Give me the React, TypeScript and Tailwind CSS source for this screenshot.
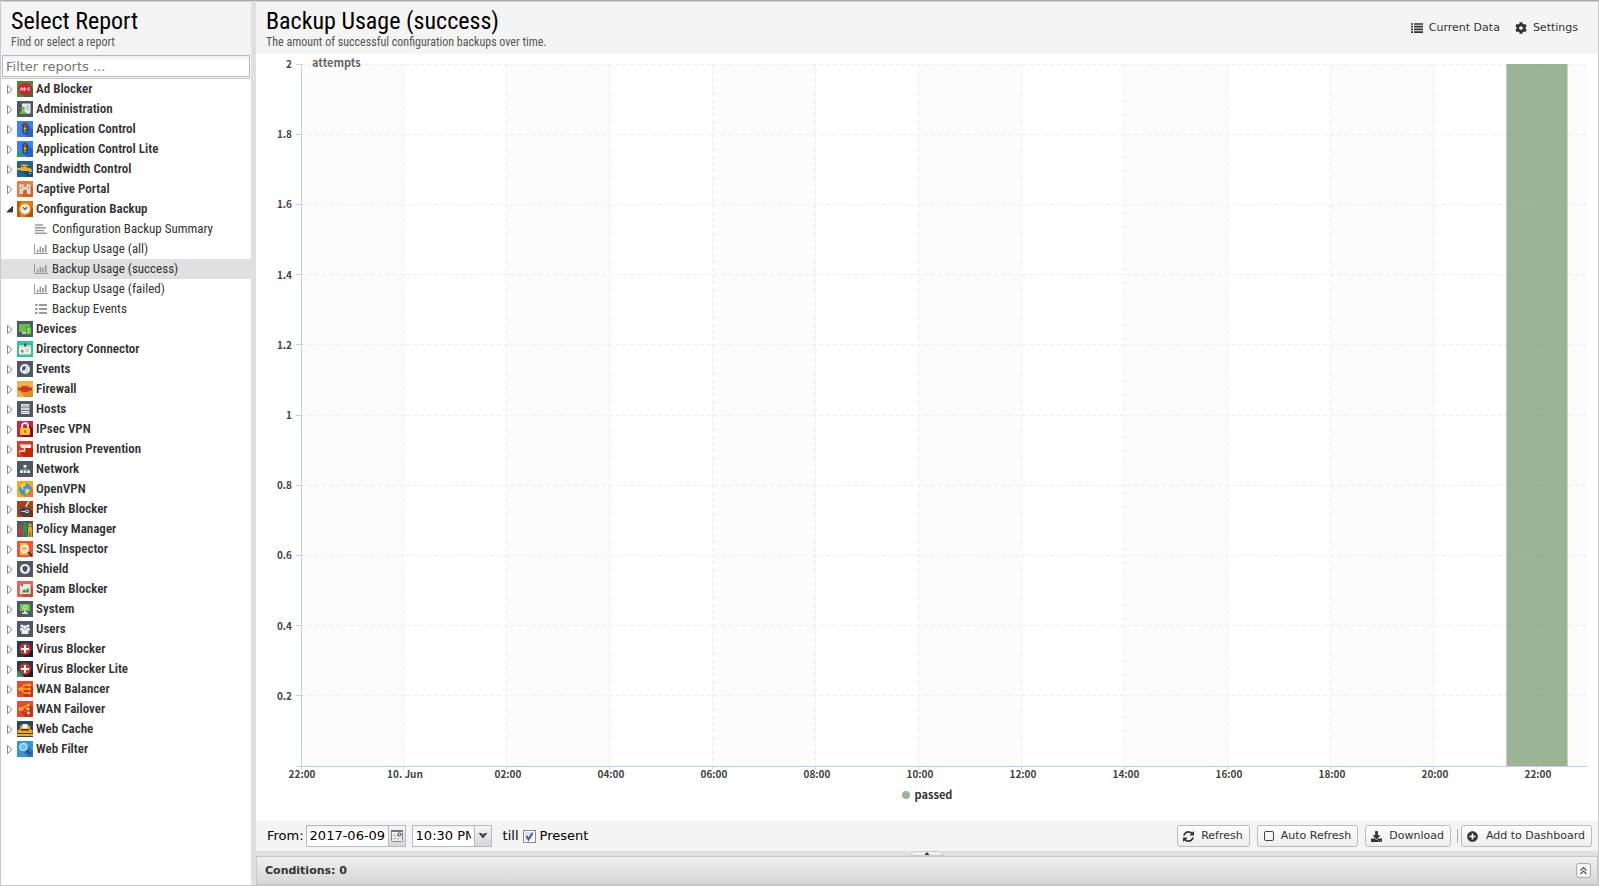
import React from 'react';
import { FaCog, FaDownload, FaPlusCircle } from 'react-icons/fa';

const condensed = "font-['Roboto_Condensed','Liberation_Sans_Narrow',Roboto,sans-serif]";

type Child = { title: string; icon: 'text' | 'chart' | 'list'; selected?: boolean };
type Category = { title: string; bg: string; art: React.ReactNode; children?: Child[] };

const cross = (
  <>
    <path d="M8 3 16 10v6H7z" fill="#141f30" />
    <circle cx="8" cy="8" r="6" fill="#c9312b" />
    <path d="M7 4h2v3h3v2H9v3H7V9H4V7h3z" fill="#fff" />
  </>
);

const trafficLight = (
  <>
    <path d="M10 3 16 9v7H10L6 12z" fill="#2861cf" />
    <rect x="5.500" y="2" width="5" height="11" rx="1.500" fill="#37474f" />
    <path d="M4.500 4h7l-1 2h-5zm0 3.500h7l-1 2h-5z" fill="#37474f" />
    <circle cx="8" cy="4.500" r="1.300" fill="#e5392e" />
    <circle cx="8" cy="7.500" r="1.300" fill="#fbc02d" />
    <circle cx="8" cy="10.500" r="1.300" fill="#3dbb4d" />
  </>
);

const liteRibbon = <path d="M0 9v7h7z" fill="#2f9e5b" />;

const categories: Category[] = [
  {
    title: 'Ad Blocker',
    bg: '#4c8a35',
    art: (
      <>
        <path d="M12 4 16 8v8H8l-3-3z" fill="#3b6e29" />
        <path d="M5 2h6l3.500 3.500v5L11 14H5l-3.500-3.500v-5z" fill="#cf2233" />
        <path d="M3.500 9.500 4.500 6.500 5.700 9.500M7 6.700v2.600c2 0 2-2.600 0-2.600M12.300 6.700c-2-.3-2 1.300-.7 1.300s1.200 1.500-.9 1.300" fill="none" stroke="#fff" strokeWidth="1" />
      </>
    ),
  },
  {
    title: 'Administration',
    bg: '#515767',
    art: (
      <>
        <rect x="5" y="2.500" width="8.500" height="10" fill="#e9edf2" />
        <path d="M9 5h3M9 7h3M10 9h2" stroke="#a3a9b3" />
        <circle cx="6" cy="7.500" r="2" fill="#63bd45" />
        <path d="M2.500 13c0-4.500 7-4.500 7 0z" fill="#63bd45" />
      </>
    ),
  },
  { title: 'Application Control', bg: '#3f82ee', art: trafficLight },
  {
    title: 'Application Control Lite',
    bg: '#3f82ee',
    art: (
      <>
        {trafficLight}
        {liteRibbon}
      </>
    ),
  },
  {
    title: 'Bandwidth Control',
    bg: '#1c6791',
    art: (
      <>
        <path d="M4 9 11 16h5v-4l-5-4z" fill="#155071" />
        <path d="M0 7h3l1.500-1h5L11 7c3 0 4 1 4 4h-3c0-1-1-1-2-1H4.500L3 9H0z" fill="#f9a61a" />
        <path d="M4 3.500h7V5H8.500v2h-2V5H4z" fill="#f9a61a" />
        <path d="M12 12.500h2" stroke="#6fd0f5" />
      </>
    ),
  },
  {
    title: 'Captive Portal',
    bg: '#f4783b',
    art: (
      <>
        <path d="M13 4 16 7v9H6l-3-3z" fill="#d95f24" />
        <path d="M2.500 3H4v1h1V3h1.500v3h3V3H11v1h1V3h1.500v10H10v-2.500a2 2 0 0 0-4 0V13H2.500z" fill="#d8dadd" />
        <path d="M4.500 6v1.500M11.500 6v1.500" stroke="#777b82" />
      </>
    ),
  },
  {
    title: 'Configuration Backup',
    bg: '#e67612',
    art: (
      <>
        <path d="M0 0h3v16H0z" fill="#c85703" />
        <path d="M12 4 16 8v8H8z" fill="#b95104" />
        <circle cx="8" cy="8" r="6" fill="#fba93c" />
        <circle cx="8" cy="8" r="4.500" fill="#f5f5f5" />
        <path d="M5.800 6.200 8 8.300 10.200 6.200" fill="none" stroke="#59616b" strokeWidth="1.400" />
      </>
    ),
    children: [
      { title: 'Configuration Backup Summary', icon: 'text' },
      { title: 'Backup Usage (all)', icon: 'chart' },
      { title: 'Backup Usage (success)', icon: 'chart', selected: true },
      { title: 'Backup Usage (failed)', icon: 'chart' },
      { title: 'Backup Events', icon: 'list' },
    ],
  },
  {
    title: 'Devices',
    bg: '#515767',
    art: (
      <>
        <rect x="2" y="3" width="11" height="8" fill="#64c344" />
        <path d="M5 11h4v2H5z" fill="#c9cdd3" />
        <rect x="9.500" y="6" width="4.500" height="7.500" fill="#7ed25f" stroke="#3d8a26" strokeWidth=".8" />
      </>
    ),
  },
  {
    title: 'Directory Connector',
    bg: '#2cc5a0',
    art: (
      <>
        <rect x="2" y="4.500" width="12" height="9" rx="1" fill="#f6f3ee" />
        <path d="M2 4.500h12v2H2z" fill="#ddd6cc" />
        <path d="M7 2.500h2.500v3H7z" fill="#4b5868" />
        <path d="M4 11.500V9h2.500v2.500z" fill="#e05848" />
        <path d="M8.500 8.500h4M8.500 10.500h3" stroke="#b8b8b8" />
      </>
    ),
  },
  {
    title: 'Events',
    bg: '#515767',
    art: (
      <>
        <circle cx="8" cy="8" r="4" fill="none" stroke="#eef0f4" strokeWidth="2" />
        <path d="M8 4.500V8l-2.500 2C6.500 12 11 11.500 11 8s-3-3.500-3-3.500z" fill="#dfe3ea" />
        <path d="M8 5v3.500H6" fill="none" stroke="#515767" />
      </>
    ),
  },
  {
    title: 'Firewall',
    bg: '#f3b046',
    art: (
      <>
        <path d="M2 10 8 16h8V9l-3-2z" fill="#e58b24" />
        <path d="M4.500 5h7v1.500H15v3h-3.500V11h-7V9.500H1v-3h3.500z" fill="#d1392a" />
        <path d="M4.500 8h7" stroke="#b92b20" strokeWidth=".6" />
      </>
    ),
  },
  {
    title: 'Hosts',
    bg: '#515767',
    art: (
      <>
        <path d="M4 3h8.500v2.700H4zM4 6.500h8.500v2.700H4zM4 10h8.500v3H4z" fill="#dfe3ea" />
        <path d="M5 4.500h6.500M5 8h6.500M5 11.500h6.500" stroke="#a2a8b5" strokeWidth=".7" />
      </>
    ),
  },
  {
    title: 'IPsec VPN',
    bg: '#cf2344',
    art: (
      <>
        <path d="M12 4 16 8v8H6l-3-3z" fill="#96031e" />
        <path d="M5 8V5a3 3 0 0 1 6 0v3" fill="none" stroke="#eceff1" strokeWidth="1.800" />
        <rect x="3" y="7" width="10" height="7" rx="1" fill="#fbc52d" />
        <path d="M8 9v3" stroke="#a86a08" strokeWidth="1.500" />
      </>
    ),
  },
  {
    title: 'Intrusion Prevention',
    bg: '#de3d1b',
    art: (
      <>
        <path d="M12 5 16 8v8H6l-3-5z" fill="#c82406" />
        <path d="M2.500 3.500h11.500V7H4.500z" fill="#f5f5f5" />
        <path d="M7.500 7v3H3.500" fill="none" stroke="#e3e6ea" strokeWidth="1.500" />
        <path d="M3 9v3" stroke="#e3e6ea" />
      </>
    ),
  },
  {
    title: 'Network',
    bg: '#515767',
    art: (
      <>
        <path d="M8 5.500v4M4.500 10V8.500h7V10" fill="none" stroke="#68b94c" />
        <path d="M6.500 4h3v2.500h-3zM3 9.500h3V12H3zM6.700 9.500h2.600V12H6.700zM10 9.500h3V12h-3z" fill="#eef0f4" />
      </>
    ),
  },
  {
    title: 'OpenVPN',
    bg: '#fba81f',
    art: (
      <>
        <path d="M13 4 16 8v8H7l-3-3z" fill="#f5762a" />
        <circle cx="8" cy="8" r="6" fill="#2a9fd8" />
        <path d="M3 5c2-3 4-3.500 6-2.500L8 5 5.500 6.500 7 8 5.500 9zM8.500 7.500 12 8l1 1.500-3 4-1.500-.5-.5-3z" fill="#fbd23c" />
      </>
    ),
  },
  {
    title: 'Phish Blocker',
    bg: '#a54410',
    art: (
      <>
        <path d="M12 7 16 11v5H6l-3-4z" fill="#7c2f08" />
        <path d="M12 0 8.500 6" stroke="#d8dadd" strokeWidth="1.500" />
        <path d="M3 8.500 8.500 5v3h4.500v5H5c-1.500 0-2.500-2-2-4.500z" fill="#2d4868" />
        <path d="M4 10.500h4M8.500 9.500h3v2h-3z" stroke="#d5dde6" strokeWidth=".9" fill="none" />
      </>
    ),
  },
  {
    title: 'Policy Manager',
    bg: '#515767',
    art: (
      <>
        <path d="M2 7.500h3.500V16H2z" fill="#d93831" />
        <circle cx="3.800" cy="5.500" r="1.500" fill="#d93831" />
        <path d="M6 5h4v11H6z" fill="#259a50" />
        <circle cx="8" cy="3.200" r="1.700" fill="#259a50" />
        <path d="M11 6h4v10h-4z" fill="#dba91d" />
        <circle cx="13" cy="4" r="1.700" fill="#dba91d" />
        <path d="M3.800 12v4M8 11v5M13 11v5" stroke="#444b5b" strokeWidth=".9" />
      </>
    ),
  },
  {
    title: 'SSL Inspector',
    bg: '#f5523c',
    art: (
      <>
        <path d="M3 2h6.500L12 4.500V14H3z" fill="#fbb62f" />
        <circle cx="7.500" cy="8" r="3.800" fill="#fbe0bd" stroke="#fff" />
        <path d="M5.500 8.500V8a1 1 0 0 1 2 0v.5M7.500 8a1 1 0 0 1 2 0v.5" fill="none" stroke="#f08a24" strokeWidth="1" />
        <path d="m11 11 4 4" stroke="#4b2b20" strokeWidth="1.800" />
      </>
    ),
  },
  {
    title: 'Shield',
    bg: '#515767',
    art: (
      <>
        <circle cx="8" cy="8" r="5" fill="#f1f3f6" />
        <path d="M8 4.800 10.700 6c0 3-1 4.400-2.700 5.200C6.300 10.400 5.300 9 5.300 6z" fill="#515767" />
      </>
    ),
  },
  {
    title: 'Spam Blocker',
    bg: '#e5645b',
    art: (
      <>
        <path d="M13 4 16 7v9H7l-3-3z" fill="#cb473f" />
        <path d="M3 3h10.500v10H3z" fill="#ecebe4" />
        <path d="M4.500 11.500 7 8l2 1.500L11 6.500l1 2.500v2.500z" fill="#3d9a4f" />
        <path d="M3 3h3v3z" fill="#7d5b4f" />
      </>
    ),
  },
  {
    title: 'System',
    bg: '#515767',
    art: (
      <>
        <rect x="3" y="3" width="10" height="7" fill="#6cc54d" />
        <circle cx="8" cy="6.500" r="1.800" fill="none" stroke="#dff3d7" />
        <path d="M7 10h2v1.500h2V13H5v-1.500h2z" fill="#dfe3ea" />
      </>
    ),
  },
  {
    title: 'Users',
    bg: '#515767',
    art: (
      <g fill="#eef0f4">
        <circle cx="5" cy="5" r="1.600" />
        <circle cx="11" cy="5" r="1.600" />
        <circle cx="8" cy="6.300" r="2" />
        <path d="M3 9.500V8c0-1 1-1.300 2.500-1L7 8.500h2L10.500 7c1.500-.3 2.500 0 2.500 1v1.500h-1.500V12c0 .6-.4 1-1 1h-5c-.6 0-1-.4-1-1V9.500z" />
      </g>
    ),
  },
  { title: 'Virus Blocker', bg: '#24395a', art: cross },
  {
    title: 'Virus Blocker Lite',
    bg: '#24395a',
    art: (
      <>
        {cross}
        {liteRibbon}
      </>
    ),
  },
  {
    title: 'WAN Balancer',
    bg: '#e8492f',
    art: (
      <>
        <path d="M13 4 16 7v9H8l-4-6z" fill="#cf2e1a" />
        <path d="M3 8h9M4 8l3-4h5M4 8l3 4h5" fill="none" stroke="#fbae1f" strokeWidth="1.300" />
        <g fill="#fbae1f">
          <circle cx="3" cy="8" r="1.700" />
          <circle cx="12.500" cy="4" r="1.500" />
          <circle cx="12.500" cy="8" r="1.500" />
          <circle cx="12.500" cy="12" r="1.500" />
        </g>
      </>
    ),
  },
  {
    title: 'WAN Failover',
    bg: '#e8492f',
    art: (
      <>
        <path d="M13 4 16 7v9H8l-4-6z" fill="#cf2e1a" />
        <path d="M3 8 11.500 4" stroke="#fbae1f" strokeWidth="1.500" />
        <path d="M3 8h8M3 8l8 4" stroke="#fbae1f" strokeDasharray="1.500 1" />
        <circle cx="3.500" cy="8" r="2" fill="#fbae1f" />
        <circle cx="11.500" cy="4" r="1.500" fill="#fbae1f" />
        <circle cx="11" cy="8" r="1.400" fill="#f6d9d4" />
        <circle cx="11.500" cy="12" r="1.400" fill="#f6d9d4" />
      </>
    ),
  },
  {
    title: 'Web Cache',
    bg: '#2b4860',
    art: (
      <>
        <path d="M3 4.500h10V8l2.500 1.500V12H.5V9.500L3 8z" fill="#f9a51a" />
        <path d="M5.500 3h5v4.500h-5z" fill="#f5f5f5" />
        <path d="M4 8h8v1.500H4z" fill="#24303c" />
        <path d="M0 13h16v2H0z" fill="#f9a51a" />
      </>
    ),
  },
  {
    title: 'Web Filter',
    bg: '#3596de',
    art: (
      <>
        <path d="M10 4 16 10v6H12L4 9z" fill="#2277bb" />
        <path d="m9 9 4.500 4" stroke="#3d4855" strokeWidth="2" />
        <circle cx="6.500" cy="6" r="3.700" fill="#6fc0f5" stroke="#d9e2ea" strokeWidth="1.200" />
      </>
    ),
  },
];

const xLabels = ['22:00', '10. Jun', '02:00', '04:00', '06:00', '08:00', '10:00', '12:00', '14:00', '16:00', '18:00', '20:00', '22:00'];
const yLabels = ['2', '1.8', '1.6', '1.4', '1.2', '1', '0.8', '0.6', '0.4', '0.2'];

// share of the plot width taken by a two hour interval
const step = 8.003;

export default function App() {
  return (
    <div className="flex h-screen border border-[#c9c9c9] border-t-[#a8a8a8] bg-[#e0e0e0] font-['DejaVu_Sans',sans-serif] text-black">
      <Sidebar />
      <main className="ml-[5px] flex min-w-0 flex-1 flex-col">
        <Header />
        <Chart />
        <Toolbar />
        <Conditions />
      </main>
    </div>
  );
}

const Heading = ({ title, text }: { title: string; text: string }) => {
  return (
    <div className={condensed}>
      <h1 className="text-2xl leading-[30px]">{title}</h1>
      <p className="text-xs leading-3 text-[#555]">{text}</p>
    </div>
  );
};

const Sidebar = () => {
  return (
    <aside className="flex w-[250px] shrink-0 flex-col bg-white">
      <div className="h-[53px] bg-[#f4f4f4] px-2.5 pt-[5px] shadow-[inset_0_1px_0_#d5d5d5]">
        <Heading title="Select Report" text="Find or select a report" />
      </div>
      <div className="border-b border-[#c4c4c4] bg-[#f4f4f4] p-px">
        <input
          type="text"
          aria-label="Filter reports"
          placeholder="Filter reports ..."
          className="block h-[22px] w-full border border-[#b5b8c8] bg-linear-to-b from-[#eef0f0] to-white to-25% px-[3px] text-[13px] placeholder:text-[#757575]"
        />
      </div>
      <ul className="min-h-0 flex-1 overflow-hidden">
        {categories.map((category) => (
          <li key={category.title}>
            <button
              type="button"
              aria-expanded={!!category.children}
              className={`flex h-5 w-full items-center text-left text-[13px] font-semibold text-[#333] ${condensed}`}
            >
              <Expander open={!!category.children} />
              <svg viewBox="0 0 16 16" className="mr-[3px] size-4 shrink-0">
                <rect width="16" height="16" fill={category.bg} />
                {category.art}
              </svg>
              {category.title}
            </button>
            {category.children && (
              <ul>
                {category.children.map((child) => (
                  <li key={child.title}>
                    <a
                      href="#"
                      className={`flex h-5 items-center gap-1 pl-[33px] text-[13px] text-[#333] ${condensed} ${child.selected ? 'bg-[#e0e0e0]' : ''}`}
                    >
                      <ReportIcon icon={child.icon} />
                      {child.title}
                    </a>
                  </li>
                ))}
              </ul>
            )}
          </li>
        ))}
      </ul>
    </aside>
  );
};

const Expander = ({ open }: { open: boolean }) => {
  return (
    <svg viewBox="0 0 16 16" className="size-4 shrink-0">
      {open ? (
        <path d="M11.500 5.500v5.500H6z" fill="#444" stroke="#111" strokeWidth=".8" />
      ) : (
        <path d="M6.500 4.500v8l4.500-4z" fill="#fff" stroke="#888" />
      )}
    </svg>
  );
};

const ReportIcon = ({ icon }: { icon: Child['icon'] }) => {
  return (
    <svg viewBox="0 0 14 12" className="h-3 w-3.5 shrink-0" stroke="#999" strokeWidth="1.500" fill="none">
      {icon === 'text' && <path d="M1 2h8M1 4.700h11M1 7.400h9M1 10.200h12" />}
      {icon === 'chart' && (
        <>
          <path d="M.5 1v9.500H14" strokeWidth="1" />
          <path d="M3.700 6.500v3M6.400 3.500v6M9 5v4.500M11.700 2v7.500" strokeWidth="1.700" />
        </>
      )}
      {icon === 'list' && <path d="M1 2h2.500M5 2h8M1 6h2.500M5 6h8M1 10h2.500M5 10h8" strokeWidth="1.800" />}
    </svg>
  );
};

const Header = () => {
  return (
    <header className="flex h-[53px] shrink-0 items-start justify-between bg-[#f4f4f4] pl-2.5 pr-5 pt-[5px] shadow-[inset_0_1px_0_#d5d5d5]">
      <Heading title="Backup Usage (success)" text="The amount of successful configuration backups over time." />
      <div className="flex gap-[15px] pt-3.5 text-[11px] leading-4 text-[#333]">
        <button type="button" className="flex items-center gap-1.5">
          <svg viewBox="0 0 12 10" className="h-2.5 w-3" stroke="#333" strokeWidth="1.700">
            <path d="M0 1h2M3 1h9M0 3.700h2M3 3.700h9M0 6.400h2M3 6.400h9M0 9.100h2M3 9.100h9" />
          </svg>
          Current Data
        </button>
        <button type="button" className="flex items-center gap-1.5">
          <FaCog size={12} />
          Settings
        </button>
      </div>
    </header>
  );
};

const Chart = () => {
  return (
    <section className="flex min-h-0 flex-1 flex-col bg-white font-['Noto_Sans_CJK_SC',sans-serif] text-[10px] font-bold">
      <div className="min-h-0 flex-1 pl-[45px] pr-2.5 pt-2.5">
        <svg className="block h-full w-full overflow-visible" role="img" aria-label="Backup Usage (success)">
          {xLabels.map((_, i) =>
            i % 2 === 0 ? (
              <rect key={i} x={`${i * step}%`} y="0" width={`${i === 12 ? 100 - 12 * step : step}%`} height="100%" fill="#fcfcfc" />
            ) : null,
          )}
          <g stroke="#ececec" strokeDasharray="4 3" shapeRendering="crispEdges">
            {yLabels.map((label, i) => (
              <line key={label} x1="0" x2="100%" y1={`${i * 10}%`} y2={`${i * 10}%`} />
            ))}
            {xLabels.map((_, i) => (
              <line key={i} x1={`${i * step}%`} x2={`${i * step}%`} y1="0" y2="100%" />
            ))}
          </g>
          <rect x="93.66%" y="0" width="4.75%" height="100%" fill="#7a9b71" fillOpacity=".75" />
          <g stroke="#c0d0e0" shapeRendering="crispEdges">
            <line x1="0" x2="0" y1="0" y2="100%" />
            <line x1="-5" x2="100%" y1="100%" y2="100%" />
            {yLabels.map((label, i) => (
              <line key={label} x1="-5" x2="0" y1={`${i * 10}%`} y2={`${i * 10}%`} />
            ))}
            {xLabels.map((_, i) => (
              <svg key={i} x={`${i * step}%`} y="100%" overflow="visible">
                <line x1="0" x2="0" y1="0" y2="3" />
              </svg>
            ))}
          </g>
          <g fill="#444" textAnchor="end">
            {yLabels.map((label, i) => (
              <text key={label} x="-9" y={`${i * 10}%`} dy="4">
                {label}
              </text>
            ))}
          </g>
          <g fill="#444" textAnchor="middle">
            {xLabels.map((label, i) => (
              <text key={i} x={`${i * step}%`} y="100%" dx="1" dy="12">
                {label}
              </text>
            ))}
          </g>
          <text x="11" y="3" fill="#666" fontSize="11" stroke="#fff" strokeWidth="3" paintOrder="stroke">
            attempts
          </text>
        </svg>
      </div>
      <div className="flex h-[55px] items-center justify-center gap-[5px] pt-0.5 text-[11px] text-[#333]">
        <span className="size-2 rounded-full bg-[#9bb494]" />
        passed
      </div>
    </section>
  );
};

const toolButton =
  'flex h-[22px] items-center gap-[7px] rounded-[3px] border border-[#bbb] bg-linear-to-b from-white to-[#ededed] text-[11px] text-[#333]';

const RefreshIcon = () => {
  return (
    <svg viewBox="0 128 1536 1536" className="size-[11px]" fill="currentColor">
      <path d="M1511 1056q0 5-1 7-64 268-268 434.500t-478 166.500q-146 0-282.500-55t-243.500-157l-129 129q-19 19-45 19t-45-19-19-45v-448q0-26 19-45t45-19h448q26 0 45 19t19 45-19 45l-137 137q71 66 161 102t187 36q134 0 250-65t186-179q11-17 53-117 8-23 30-23h192q13 0 22.500 9.500t9.500 22.500zm25-800v448q0 26-19 45t-45 19h-448q-26 0-45-19t-19-45 19-45l138-138q-148-137-349-137-134 0-250 65t-186 179q-11 17-53 117-8 23-30 23h-199q-13 0-22.500-9.500t-9.500-22.500v-7q65-268 270-434.500t480-166.500q146 0 284 55.500t245 156.500l130-129q19-19 45-19t45 19 19 45z" />
    </svg>
  );
};

const Toolbar = () => {
  return (
    <div className="flex h-[30px] shrink-0 items-center justify-between bg-[#f4f4f4] pl-[11px] pr-1.5 text-[13px]">
      <div className="flex items-center">
        <label htmlFor="from-date">From:</label>
        <div className="ml-0.5 flex h-[22px] w-[100px] border border-[#b5b8c8]">
          <input
            id="from-date"
            type="text"
            defaultValue="2017-06-09"
            className="w-0 flex-1 bg-linear-to-b from-[#eef0f0] to-white to-25% pl-[3px]"
          />
          <button type="button" aria-label="Pick date" className="border-l border-[#b5b8c8] bg-linear-to-b from-[#f6f6f6] to-[#d6d6d6] px-px">
            <svg viewBox="0 0 14 16" className="h-4 w-3.5">
              <rect x="1.500" y="2.500" width="11" height="11" rx="1" fill="#f4f4f4" stroke="#888" />
              <path d="M1 3h12" stroke="#777" strokeWidth="2" />
              <path d="M2 7.500h7M2 10.500h10M4.500 5v8M7.500 5v8" stroke="#ccc" />
              <circle cx="9.500" cy="6.500" r="1.500" fill="#fff" stroke="#222" />
            </svg>
          </button>
        </div>
        <div className="ml-1.5 flex h-[22px] w-20 border border-[#b5b8c8]">
          <input
            type="text"
            aria-label="From time"
            defaultValue="10:30 PM"
            className="w-0 flex-1 bg-linear-to-b from-[#eef0f0] to-white to-25% px-[3px]"
          />
          <button type="button" aria-label="Pick time" className="border-l border-[#b5b8c8] bg-linear-to-b from-[#f6f6f6] to-[#d6d6d6] px-px">
            <svg viewBox="0 0 14 16" className="h-4 w-3.5">
              <path d="M2.500 5h3L7 6.700 8.500 5h3L7 10.500z" fill="#444" />
            </svg>
          </button>
        </div>
        <span className="ml-[11px]">till</span>
        <label className="ml-1 flex items-center gap-1">
          <span className="grid">
            <input
              type="checkbox"
              defaultChecked
              className="col-start-1 row-start-1 size-[13px] appearance-none border border-[#888] bg-linear-to-br from-[#cfd4da] to-white shadow-[inset_0_0_0_1px_#fff]"
            />
            <svg viewBox="0 0 13 13" className="pointer-events-none col-start-1 row-start-1 size-[13px]">
              <path d="M3.500 6 5.500 9.500 9.500 3" fill="none" stroke="#3f5ca8" strokeWidth="2" />
            </svg>
          </span>
          Present
        </label>
      </div>
      <div className="flex items-center">
        <button type="button" className={`${toolButton} pl-[5px] pr-1.5`}>
          <RefreshIcon />
          Refresh
        </button>
        <button type="button" className={`${toolButton} ml-[7px] px-1.5`}>
          <svg viewBox="0 0 10 10" className="size-2.5">
            <rect x=".5" y=".5" width="9" height="9" rx="1.500" fill="none" stroke="#444" />
          </svg>
          Auto Refresh
        </button>
        <button type="button" className={`${toolButton} ml-[7px] pl-[5px] pr-1.5`}>
          <FaDownload size={11} />
          Download
        </button>
        <span className="ml-1.5 mr-[3px] h-3.5 w-px bg-[#b5ad8f]" />
        <button type="button" className={`${toolButton} pl-[5px] pr-1.5`}>
          <FaPlusCircle size={11} />
          <span className="pl-px">Add to Dashboard</span>
        </button>
      </div>
    </div>
  );
};

const Conditions = () => {
  return (
    <>
      <div className="flex h-[5px] shrink-0 justify-center">
        <svg viewBox="0 0 34 5" className="h-[5px] w-[34px]">
          <path d="M.5 4.500 4 .5h26l3.500 4z" fill="#eee" stroke="#ccc" />
          <path d="M14.500 4 17 1l2.500 3z" fill="#333" />
        </svg>
      </div>
      <div className="flex h-[29px] shrink-0 items-center justify-between border border-[#c8c8c8] bg-linear-to-b from-[#f0f0f0] to-[#d6d6d6] pl-2 pr-1.5">
        <h2 className="pt-px text-[11px] font-bold text-[#333]">Conditions: 0</h2>
        <button type="button" aria-label="Expand" className="size-[15px] rounded-[3px] border border-[#aaa] bg-[#f6f6f6]">
          <svg viewBox="0 0 13 13" className="size-[13px]" fill="none" stroke="#555" strokeWidth="1.200">
            <path d="M3.500 6.500l3-3 3 3M3.500 10l3-3 3 3" />
          </svg>
        </button>
      </div>
    </>
  );
};
